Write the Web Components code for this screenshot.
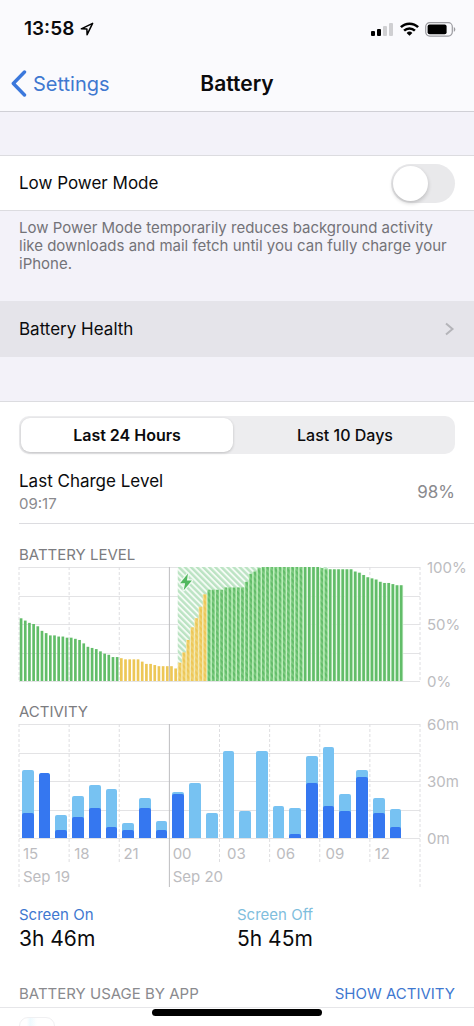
<!DOCTYPE html>
<html lang="en">
<head>
<meta charset="utf-8">
<meta name="viewport" content="width=device-width, initial-scale=1">
<title>Battery</title>
<style>
  html, body { margin: 0; }
  body {
    font-family: Inter, "Liberation Sans", sans-serif;
    color: #0b0b0d;
    --gutter: 19px;
    --blue: #3f78d0;
    --grey: #8a8a8e;
    --line: #dcdce0;
    --group: #f3f2f9;
  }
</style>
</head>
<body>
<phone-screen>
  <status-bar slot="top" time="13:58"></status-bar>
  <nav-bar slot="top" back="Settings">Battery</nav-bar>
  <toggle-row>Low Power Mode</toggle-row>
  <group-note>Low Power Mode temporarily reduces background activity like downloads and mail fetch until you can fully charge your iPhone.</group-note>
  <link-row>Battery Health</link-row>
  <usage-card>
    <segmented-control options="Last 24 Hours,Last 10 Days"></segmented-control>
    <charge-level time="09:17" level="98%">Last Charge Level</charge-level>
    <chart-block scale="100%,50%,0%"><span slot="title">BATTERY LEVEL</span><level-plot></level-plot></chart-block>
    <chart-block scale="60m,30m,0m"><span slot="title">ACTIVITY</span><activity-plot></activity-plot></chart-block>
    <screen-totals>
      <screen-total label="Screen On" style="--tint:#3f78d0">3h 46m</screen-total>
      <screen-total label="Screen Off" style="--tint:#7fbedd">5h 45m</screen-total>
    </screen-totals>
    <app-usage action="SHOW ACTIVITY">BATTERY USAGE BY APP</app-usage>
  </usage-card>
</phone-screen>

<script>
const define = (name, render, setup) => customElements.define(name, class extends HTMLElement {
  connectedCallback() {
    if (this.shadowRoot) return;
    this.attachShadow({ mode: 'open' }).innerHTML = render(this);
    if (setup) setup(this);
  }
});

define('phone-screen', () => `
  <style>
    :host { display: flex; flex-direction: column; height: 100vh; overflow: hidden; position: relative; background: var(--group); }
    header { background: #fafafd; border-bottom: 1px solid #d0d0d6; }
    main { flex: 1; min-height: 0; overflow: hidden; display: flex; flex-direction: column; padding-top: 43px; }
    .home { position: absolute; bottom: 10px; left: 50%; width: 170px; height: 7px; margin-left: -85px; border-radius: 4px; background: #000; }
  </style>
  <header><slot name="top"></slot></header>
  <main><slot></slot></main>
  <div class="home"></div>`);

define('status-bar', el => `
  <style>
    :host { display: flex; align-items: center; justify-content: space-between; height: 24px; padding: 17px 18px 15px 24px; }
    .left, .right { display: flex; align-items: center; }
    .left { gap: 6px; font-size: 19px; font-weight: 600; line-height: 24px; }
    .right { gap: 6px; }
    svg { display: block; }
  </style>
  <div class="left"><span>${el.getAttribute('time')}</span>
    <svg width="14" height="14" viewBox="0 0 14 14"><path d="M1.3 6.8 12.6 1.3 7.1 12.7 6.9 7z" fill="none" stroke="#000" stroke-width="1.5" stroke-linejoin="round"/></svg>
  </div>
  <div class="right">
    <svg width="23" height="14" viewBox="0 0 23 14"><rect x="0" y="9" width="4" height="5" rx="1"/><rect x="6" y="7" width="4" height="7" rx="1"/><rect x="12" y="4" width="4" height="10" rx="1" fill="#cfcfd2"/><rect x="18" y="1" width="4" height="13" rx="1" fill="#cfcfd2"/></svg>
    <svg width="19" height="14" viewBox="0 0 19 14"><g fill="none" stroke="#000" stroke-width="2.5"><path d="M.9 5.2a12.2 12.2 0 0 1 17.2 0"/><path d="M4.1 8.6a7.7 7.7 0 0 1 10.8 0"/></g><path d="M9.5 13.8 6.6 11a4.2 4.2 0 0 1 5.8 0z"/></svg>
    <svg width="31" height="15" viewBox="0 0 31 15"><rect x=".7" y=".7" width="26.6" height="13.4" rx="4" fill="none" stroke="#9b9ba0" stroke-width="1.2"/><rect x="2.6" y="2.5" width="19" height="9.8" rx="2"/><path d="M28.8 5c2 .8 2 4 0 4.800z" fill="#9b9ba0"/></svg>
  </div>`);

define('nav-bar', el => `
  <style>
    :host { display: grid; grid-template-columns: 1fr auto 1fr; align-items: center; height: 55px; padding: 0 11px; }
    a { display: flex; align-items: center; gap: 6px; color: var(--blue); text-decoration: none; font-size: 20px; line-height: 26px; }
    h1 { margin: 0; font-size: 21px; font-weight: 600; line-height: 26px; }
    svg { display: block; }
  </style>
  <a href="#settings"><svg width="16" height="27" viewBox="0 0 16 27"><path d="M13.500 2 2.300 13.500 13.500 25" fill="none" stroke="#3b78dc" stroke-width="3.400" stroke-linecap="round" stroke-linejoin="round"/></svg>${el.getAttribute('back')}</a>
  <h1><slot></slot></h1>`);

define('toggle-row', () => `
  <style>
    :host { display: block; flex: none; background: #fff; border-block: 1px solid var(--line); }
    label { display: flex; align-items: center; justify-content: space-between; height: 54px; padding: 0 var(--gutter); font-size: 17px; }
    input { appearance: none; margin: 0; width: 64px; height: 39px; border-radius: 20px; background: #e9e9eb; padding: 2px; display: flex; }
    input::before { content: ""; width: 35px; height: 35px; border-radius: 50%; background: #fff; box-shadow: 0 2px 4px #0003; }
    input:checked { justify-content: flex-end; background: #65c466; }
  </style>
  <label><slot></slot><input type="checkbox" role="switch"></label>`);

define('group-note', () => `
  <style>
    :host { display: block; flex: none; padding: 8px var(--gutter) 28px; font-size: 15px; line-height: 18px; color: #737378; }
  </style><slot></slot>`);

define('link-row', () => `
  <style>
    :host { display: block; flex: none; background: #e5e4ea; margin-bottom: 44px; }
    a { display: flex; align-items: center; justify-content: space-between; height: 56px; padding: 0 var(--gutter); font-size: 17px; color: inherit; text-decoration: none; }
  </style>
  <a href="#health"><slot></slot><svg width="11" height="14" viewBox="0 0 11 14"><path d="M2 1.500 8.500 7 2 12.500" fill="none" stroke="#b4b4b9" stroke-width="2"/></svg></a>`);

define('usage-card', () => `
  <style>
    :host { display: block; flex: 1; background: #fff; border-top: 1px solid var(--line); padding-top: 14px; }
  </style><slot></slot>`);

define('segmented-control', el => `
  <style>
    :host { display: grid; grid-template-columns: 1fr 1fr; margin: 0 var(--gutter); padding: 2px; border-radius: 10px; background: #ededef; }
    button { appearance: none; border: 0; margin: 0; padding: 0; height: 34px; border-radius: 9px; background: none; font: 500 16px/20px Inter, sans-serif; color: inherit; }
    button[aria-pressed=true] { background: #fff; font-weight: 600; box-shadow: 0 1px 3px #0003; margin-right: 4px; }
  </style>
  ${el.getAttribute('options').split(',').map((t, i) => `<button type="button" aria-pressed="${!i}">${t}</button>`).join('')}`,
  el => el.shadowRoot.addEventListener('click', e => {
    if (e.target.matches('button')) el.shadowRoot.querySelectorAll('button').forEach(b => b.setAttribute('aria-pressed', b === e.target));
  }));

define('charge-level', el => `
  <style>
    :host { display: flex; align-items: center; justify-content: space-between; margin-left: var(--gutter); padding: 15px var(--gutter) 8px 0; border-bottom: 1px solid var(--line); color: var(--grey); font-size: 17px; }
    .name { color: #0b0b0d; line-height: 24px; }
    time { display: block; font-size: 15px; line-height: 22px; }
  </style>
  <div><div class="name"><slot></slot></div><time>${el.getAttribute('time')}</time></div>
  <span>${el.getAttribute('level')}</span>`);

define('chart-block', el => `
  <style>
    :host { display: block; margin: 21px 0 0 var(--gutter); }
    h2 { margin: 0 0 2px; font-size: 15px; font-weight: 400; line-height: 20px; color: #7c7c80; }
    .row { display: grid; grid-template-columns: 1fr 54px; align-items: start; }
    .scale { display: flex; flex-direction: column; justify-content: space-between; height: 132px; margin: -8px 0 -10px 7px; font-size: 15px; line-height: 18px; color: #bcbcc0; }
  </style>
  <h2><slot name="title"></slot></h2>
  <div class="row"><slot></slot><div class="scale">${el.getAttribute('scale').split(',').map(s => `<span>${s}</span>`).join('')}</div></div>`);

const PLOT = 114;
const gridLines = (tall, short) => {
  let out = '';
  for (let i = 0; i <= 4; i++) {
    const y = Math.round(PLOT * i / 4) + .5;
    out += `<line x1="0" x2="100%" y1="${y}" y2="${y}" stroke="#e3e3e5"/>`;
  }
  for (let i = 0; i <= 8; i++) {
    const solid = i === 3, long = i === 0 || i === 8 || solid;
    out += `<line x1="${i * 12.5}%" x2="${i * 12.5}%" y1="0" y2="${long ? tall : short}" stroke="${solid ? '#bdbdc0' : '#dedee1'}" ${solid ? '' : 'stroke-dasharray="3 2"'}/>`;
  }
  return out;
};

const levels = [55,53,51,50,48,44,42,40,40,39,39,38,38,37,36,33,30,29,28,26,24,23,21,21,
  20,19,19,19,19,17,15,15,14,13,13,13,13,11, 16,25,36,47,55,65,76,
  80,80,80,80,82,82,82,82,82,87,94,96,99,100,100,100,100,100,100,100,100,100,100,100,100,100,100,
  99,98,98,98,98,98,98,98,96,95,93,91,90,89,87,86,86,85,84,84];
const slot = 100 / 96;
const span = (a, b) => `x="${a * slot}%" width="${(b - a) * slot}%" y="0" height="100%"`;
const charging = i => i >= 38 && i < 68 || i === 72 || i === 73;

define('level-plot', () => `
  <style>
    :host, .plot { display: block; }
    .plot { width: 100%; height: ${PLOT}px; overflow: visible; }
  </style>
  <svg class="plot" role="img" aria-label="Battery level over the last 24 hours">
    <defs>
      <pattern id="hatch" width="4.3" height="4.3" patternUnits="userSpaceOnUse" patternTransform="rotate(-45)"><rect width="4.3" height="4.3" fill="#f4fbf5"/><rect width="2.4" height="4.3" fill="#bbe3c3"/></pattern>
      <pattern id="sheen" width="4.3" height="4.3" patternUnits="userSpaceOnUse" patternTransform="rotate(-45)"><rect width="2" height="4.3" fill="#f4ffe4" fill-opacity=".18"/></pattern>
    </defs>
    ${gridLines(PLOT, PLOT)}
    <rect ${span(38, 68)} fill="url(#hatch)"/>
    <rect ${span(72, 74)} fill="url(#hatch)"/>
    ${levels.map((v, i) => {
      const box = `y="${100 - v}%" height="${v}%"`;
      const full = `x="${i * slot}%" width="${slot}%" ${box}`;
      const low = i >= 24 && i < 45;
      const back = charging(i) ? (low ? '#f8e6a8' : '#b9efb8') : i >= 45 ? '#e4f8e4' : '';
      return (back ? `<rect ${full} fill="${back}"/>` : '')
        + `<rect x="${(i + .18) * slot}%" width="${.64 * slot}%" ${box} fill="${low ? '#edc757' : '#62bd69'}"/>`
        + (charging(i) ? `<rect ${full} fill="url(#sheen)"/>` : '');
    }).join('')}
    <svg x="40%" y="6" width="14" height="18" viewBox="0 0 14 18" overflow="visible"><path d="M8.600.5.700 10.300H5.700L4.300 17.300 12.500 7.500H7.500z" fill="#52b85f" stroke="#eef9f0" stroke-width="2.500" paint-order="stroke" stroke-linejoin="round"/></svg>
  </svg>`);

const minutes = [[36,13],[34,34],[12,4],[22,11],[28,16],[26,6],[8,4],[21,16],[9,4],[24,23],[29,0],[13,0],
  [46,0],[14,0],[46,0],[17,0],[16,2],[43,29],[48,17],[23,14],[36,32],[21,13],[15,6]];

define('activity-plot', () => `
  <style>
    :host { display: block; position: relative; }
    .grid { position: absolute; inset: 0; width: 100%; height: 100%; overflow: visible; }
    .bars { position: relative; display: grid; grid-template-columns: repeat(24, 1fr); align-items: end; height: ${PLOT}px; }
    .bar { display: flex; align-items: end; margin: 0 2px 0 3px; background: #77c2f2; border-radius: 2px 2px 0 0; overflow: hidden; }
    .on { width: 100%; background: #3577f0; border-radius: 2px 2px 0 0; }
    .labels { position: relative; display: grid; grid-template-columns: repeat(8, 1fr); height: 43px; padding-top: 6px; font-size: 15px; line-height: 20px; color: #bcbcc0; }
    .labels div { padding-left: 4px; white-space: nowrap; }
    .labels span { display: block; margin-bottom: 3px; }
  </style>
  <svg class="grid">${gridLines(163, 139)}</svg>
  <div class="bars" role="img" aria-label="Minutes of activity per hour">
    ${minutes.map(([t, on]) => `<div class="bar" style="height:${Math.round(t * PLOT / 60)}px"><div class="on" style="height:${Math.round(on * PLOT / 60)}px"></div></div>`).join('')}
  </div>
  <div class="labels">
    ${['15', '18', '21', '00', '03', '06', '09', '12'].map((h, i) => `<div><span>${h}</span>${i === 0 ? '<span>Sep 19</span>' : i === 3 ? '<span>Sep 20</span>' : ''}</div>`).join('')}
  </div>`);

define('screen-totals', () => `
  <style>:host { display: grid; grid-template-columns: 1fr 1fr; margin: 18px var(--gutter) 0; }</style><slot></slot>`);

define('screen-total', el => `
  <style>
    :host { display: block; font-size: 21px; line-height: 28px; }
    .label { font-size: 15px; line-height: 20px; color: var(--tint); }
  </style>
  <div class="label">${el.getAttribute('label')}</div>
  <div><slot></slot></div>`);

define('app-usage', el => `
  <style>
    :host { display: block; }
    .head { display: flex; justify-content: space-between; padding: 31px var(--gutter) 3px; font-size: 15px; line-height: 20px; color: var(--grey); border-bottom: 1px solid #e6e6e9; }
    button { appearance: none; border: 0; padding: 0; background: none; font: inherit; color: var(--blue); }
    .icon { width: 34px; height: 34px; margin: 9px var(--gutter); border: 1px solid #f0f0f2; border-radius: 9px; background: linear-gradient(90deg, #fff 20%, #eefafe 30%, #fff 50%); }
  </style>
  <div class="head"><span><slot></slot></span><button type="button">${el.getAttribute('action')}</button></div>
  <div class="icon"></div>`);
</script>
</body>
</html>
